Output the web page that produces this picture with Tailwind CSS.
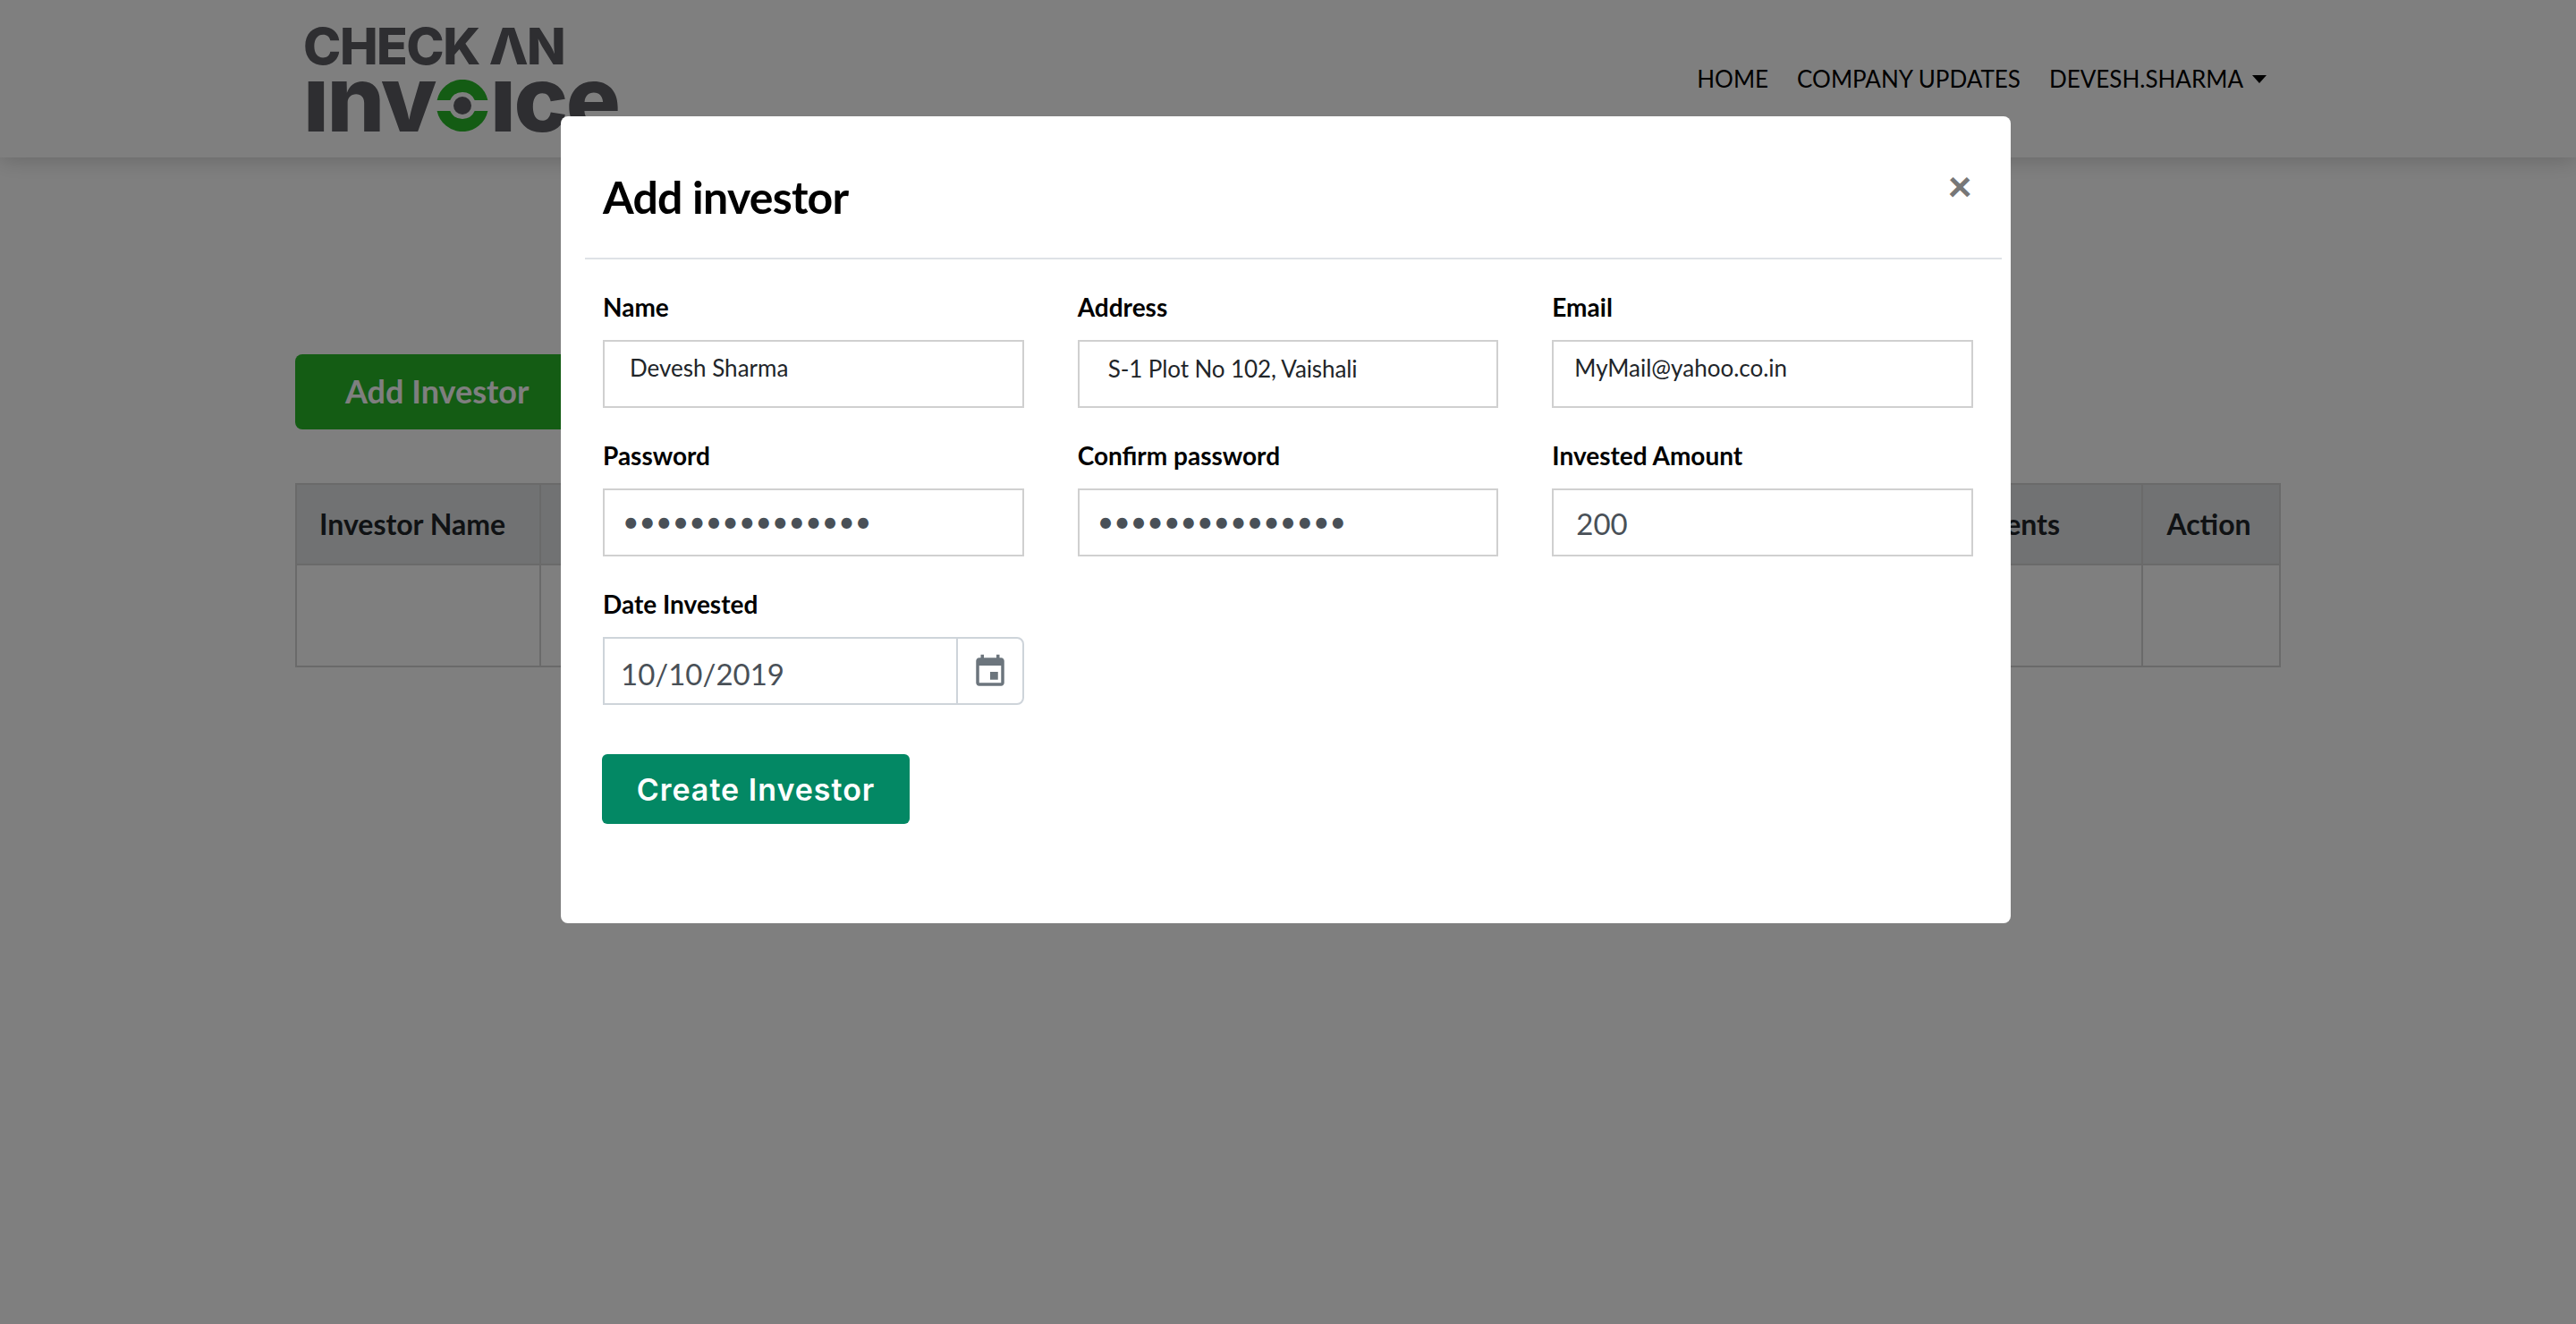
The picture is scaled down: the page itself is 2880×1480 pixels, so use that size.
<!DOCTYPE html>
<html lang="en">
<head>
  <meta charset="UTF-8">
  <title>Check An Invoice</title>
  <script src="https://cdn.jsdelivr.net/npm/@tailwindcss/browser@4"></script>
</head>
<body class="bg-white h-screen overflow-hidden font-['Lato',sans-serif] text-[#212529]">
  <!-- page behind the dialog -->
  <header class="h-[176px] bg-white shadow-[0_2px_24px_rgba(0,0,0,0.2)]">
    <div class="w-[2220px] mx-auto h-full flex justify-between">
      <a class="block ml-[9px] pt-[22px] text-[#5c5c62] font-['Inter',sans-serif] font-extrabold">
        <div class="text-[57px] leading-[60px] tracking-[-1.5px] h-[60px]">CHECK ΛN</div>
        <div class="flex items-end ml-[0px] mt-[-8px] h-[72px] text-[102px] leading-[72px] tracking-[-2.5px]">
          <span>ınv</span>
          <svg class="w-[58px] h-[58px] mx-[2px] mb-[-1px]" viewBox="-29 -29 58 58">
            <path fill="#28b828" d="M-28.4-6A29 29 0 0 1 28.4-6L13.7-6A15 15 0 0 0-13.7-6Z"/>
            <path fill="#28b828" d="M-28.4 6A29 29 0 0 0 28.4 6L13.7 6A15 15 0 0 1-13.7 6Z"/>
            <circle r="10" fill="#5c5c62"/>
          </svg>
          <span>ıce</span>
        </div>
      </a>
      <nav class="flex items-center gap-[32px] pr-[16px] text-[26px] text-black">
        <a>HOME</a>
        <a>COMPANY UPDATES</a>
        <a class="flex items-center gap-[10px]">DEVESH.SHARMA
          <span class="w-0 h-0 border-x-[8px] border-x-transparent border-t-[9px] border-t-black"></span>
        </a>
      </nav>
    </div>
  </header>

  <main class="w-[2220px] mx-auto pt-[220px]">
    <button class="h-[84px] w-[340px] rounded-[8px] bg-[#28b828] text-white font-bold text-[36px] text-left pl-[56px] pb-[2px]">Add Investor</button>

    <table class="mt-[60px] w-full table-fixed border-collapse text-[32px] font-bold">
      <thead>
        <tr class="h-[90px] bg-[#e2e4e6]">
          <th class="w-[273px] border-2 border-[#d4d4d4] text-left pl-[25px]">Investor Name</th>
          <th class="border-2 border-[#d4d4d4]"></th>
          <th class="w-[292px] border-2 border-[#d4d4d4] text-left pl-[25px]">Investments</th>
          <th class="w-[154px] border-2 border-[#d4d4d4] text-center pr-[5px]">Action</th>
        </tr>
      </thead>
      <tbody>
        <tr class="h-[114px]">
          <td class="border-2 border-[#d4d4d4]"></td>
          <td class="border-2 border-[#d4d4d4]"></td>
          <td class="border-2 border-[#d4d4d4]"></td>
          <td class="border-2 border-[#d4d4d4]"></td>
        </tr>
      </tbody>
    </table>
  </main>

  <div class="fixed inset-0 bg-black/50"></div>

  <!-- Add investor dialog -->
  <div class="fixed left-[627px] top-[130px] w-[1621px] rounded-[8px] bg-white">
    <div class="h-[160px] ml-[27px] mr-[10px] border-b-2 border-[#dee2e6] flex justify-between pl-[20px]">
      <h2 class="pt-[60px] text-[50px] leading-[60px] tracking-[-0.75px] font-bold text-black">Add investor</h2>
      <button class="h-[50px] mt-[52px] mr-[33px] text-[48px] leading-[50px] font-black text-[#777777]">×</button>
    </div>
    <form class="pl-[47px] pr-[42px] pt-[35px] pb-[111px]">
      <div class="grid grid-cols-3 gap-x-[60px] gap-y-[35px] text-[28px]">
        <div>
          <label class="block mb-[19px] leading-[36px] font-bold text-black">Name</label>
          <input type="text" value="Devesh Sharma" class="w-full h-[76px] border-2 border-[#d0d0d0] pl-[28px] pb-[14px] text-[26px] outline-none">
        </div>
        <div>
          <label class="block mb-[19px] leading-[36px] font-bold text-black">Address</label>
          <input type="text" value="S-1 Plot No 102, Vaishali" class="w-full h-[76px] border-2 border-[#d0d0d0] pl-[32px] pb-[12px] text-[26px] tracking-[-0.1px] outline-none">
        </div>
        <div>
          <label class="block mb-[19px] leading-[36px] font-bold text-black">Email</label>
          <input type="text" value="MyMail@yahoo.co.in" class="w-full h-[76px] border-2 border-[#d0d0d0] pl-[23px] pb-[14px] text-[26px] outline-none">
        </div>
        <div>
          <label class="block mb-[19px] leading-[36px] font-bold text-black">Password</label>
          <input type="password" value="passwordpasswor" class="w-full h-[76px] border-2 border-[#d0d0d0] pl-[20px] pb-[3px] text-[32px] text-[#495057] outline-none">
        </div>
        <div>
          <label class="block mb-[19px] leading-[36px] font-bold text-black">Confirm password</label>
          <input type="password" value="passwordpasswor" class="w-full h-[76px] border-2 border-[#d0d0d0] pl-[20px] pb-[3px] text-[32px] text-[#495057] outline-none">
        </div>
        <div>
          <label class="block mb-[19px] leading-[36px] font-bold text-black">Invested Amount</label>
          <input type="text" value="200" class="w-full h-[76px] border-2 border-[#d0d0d0] pl-[25px] pt-[2px] text-[33px] text-[#495057] outline-none">
        </div>
        <div>
          <label class="block mb-[19px] leading-[36px] font-bold text-black">Date Invested</label>
          <div class="flex h-[76px]">
            <input type="text" value="10/10/2019" class="flex-1 min-w-0 border-2 border-r-0 border-[#ced4da] pl-[18px] pt-[7px] text-[33px] text-[#495057] outline-none">
            <span class="w-[76px] pt-[2px] flex items-center justify-center border-2 border-[#ced4da] rounded-r-[8px]">
              <svg class="w-[42px] h-[42px]" viewBox="0 0 24 24" fill="#6c757d"><path d="M17 12h-5v5h5v-5zM16 1v2H8V1H6v2H5c-1.11 0-1.99.9-1.99 2L3 19c0 1.1.89 2 2 2h14c1.1 0 2-.9 2-2V5c0-1.1-.9-2-2-2h-1V1h-2zm3 18H5V8h14v11z"/></svg>
            </span>
          </div>
        </div>
      </div>
      <button type="button" class="mt-[55px] ml-[-1px] h-[78px] w-[344px] rounded-[6px] bg-[#038864] text-white font-['Inter',sans-serif] font-semibold text-[34px] tracking-[1px]">Create Investor</button>
    </form>
  </div>
</body>
</html>
